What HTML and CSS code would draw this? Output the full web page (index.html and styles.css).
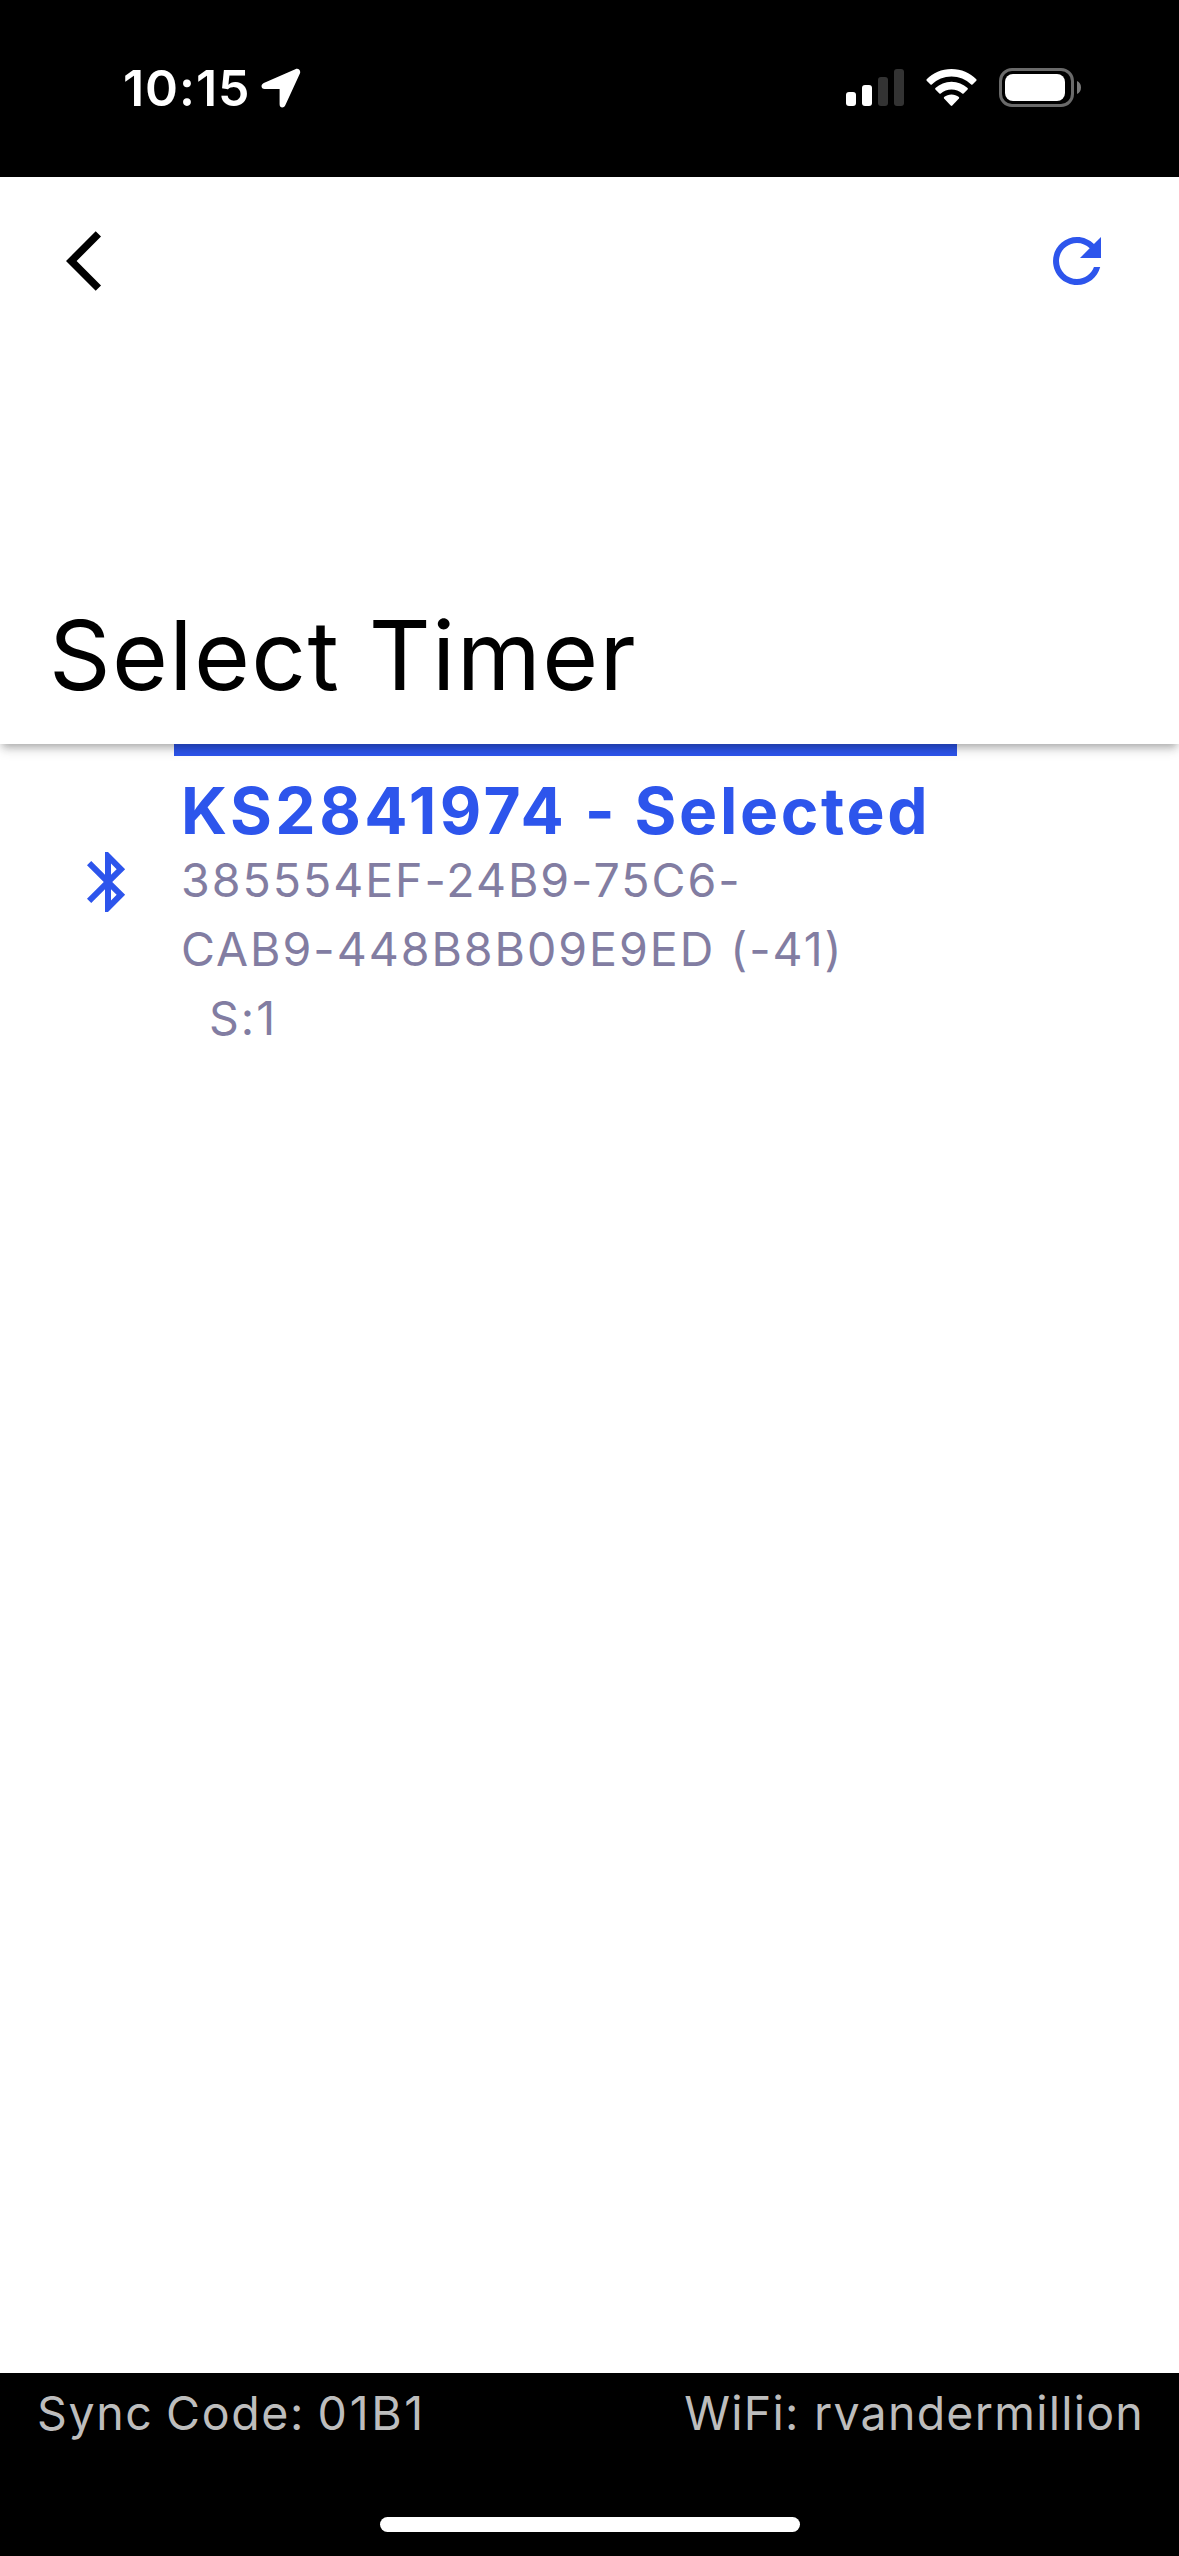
FILE: index.html
```html
<!DOCTYPE html>
<html lang="en">
<head>
<meta charset="utf-8">
<title>Select Timer</title>
<link rel="stylesheet" href="styles.css">
</head>
<body>
<div class="status-bar">
  <div class="status-left">
    <span class="time">10:15</span>
    <svg class="location" width="40" height="40" viewBox="0 0 40 40"><path d="M34.3 1.2 2.8 15.1C-.6 16.700-.1 21 3.700 21H18.600V36.200C18.600 40.200 22.700 40.600 24.300 37.300L38.900 5.600C40.100 2.700 37.700-.2 34.300 1.200Z"/></svg>
  </div>
  <div class="status-right">
    <svg class="signal" width="58" height="38" viewBox="0 0 58 38">
      <rect x="0" y="23" width="10" height="14" rx="3"/>
      <rect x="16" y="16" width="10" height="21" rx="3"/>
      <rect class="dim" x="32" y="8" width="10" height="29" rx="3"/>
      <rect class="dim" x="48" y="0" width="10" height="37" rx="3"/>
    </svg>
    <svg class="wifi" width="51" height="38" viewBox="0 0 51 38">
      <path d="M25.500 0C35.500 0 44 4 50.300 10.200Q51 11 50.300 11.700L46.500 15.500Q45.800 16 45.200 15.500C39.800 10.300 33 7.500 25.500 7.500S11.200 10.300 5.800 15.500Q5.200 16 4.500 15.500L.7 11.700Q0 11 .7 10.200C7 4 15.500 0 25.500 0Z"/>
      <path d="M25.500 12.800C31.800 12.800 37.200 15.200 41.600 19.100Q42.200 19.800 41.600 20.500L37.600 24.500Q36.900 25 36.200 24.500C33.200 21.900 29.600 20.400 25.500 20.400S17.800 21.900 14.800 24.500Q14.100 25 13.400 24.500L9.400 20.500Q8.800 19.800 9.400 19.100C13.800 15.200 19.200 12.800 25.500 12.800Z"/>
      <path d="M25.500 25.500C28.300 25.500 30.800 26.400 32.900 28Q33.500 28.700 32.900 29.400L26.300 36.500Q25.500 37.300 24.700 36.500L18.100 29.400Q17.500 28.700 18.100 28C20.200 26.400 22.700 25.500 25.500 25.500Z"/>
    </svg>
    <svg class="battery" width="83" height="40" viewBox="0 0 83 40">
      <rect class="shell" x="1.500" y="1.500" width="72" height="36" rx="11.500"/>
      <rect x="6" y="6" width="60" height="27" rx="8"/>
      <path class="cap" d="M78 13C80.500 14 82 16.500 82 19.500S80.500 25 78 26Z"/>
    </svg>
  </div>
</div>
<header class="app-bar">
  <div class="toolbar">
    <svg class="back" width="72" height="72" viewBox="0 0 24 24"><path d="M11.670 3.870 9.900 2.100 0 12l9.900 9.900 1.770-1.770L3.540 12z"/></svg>
    <svg class="refresh" width="72" height="72" viewBox="0 0 24 24"><path d="M17.650 6.350C16.200 4.900 14.210 4 12 4c-4.420 0-7.990 3.580-7.990 8s3.570 8 7.990 8c3.730 0 6.840-2.550 7.730-6h-2.080c-.82 2.330-3.040 4-5.650 4-3.310 0-6-2.690-6-6s2.690-6 6-6c1.660 0 3.140.69 4.220 1.780L13 11h7V4l-2.350 2.350z"/></svg>
  </div>
  <h1 class="title">Select Timer</h1>
</header>
<main class="devices">
  <div class="device">
    <div class="leading">
      <svg class="bluetooth" width="72" height="72" viewBox="0 0 24 24"><path d="M17.710 7.710 12 2h-1v7.590L6.410 5 5 6.410 10.590 12 5 17.590 6.410 19 11 14.410V22h1l5.710-5.710-4.300-4.290 4.300-4.290zM13 5.830l1.880 1.880L13 9.590V5.830zm1.880 10.460L13 18.170v-3.760l1.880 1.880z"/></svg>
    </div>
    <div class="details">
      <h2 class="name"><span class="serial">KS2841974</span> - Selected</h2>
      <p class="line">385554EF-24B9-75C6-</p>
      <p class="line">CAB9-448B8B09E9ED (-41)</p>
      <p class="line slot">S:1</p>
    </div>
  </div>
</main>
<footer class="footer">
  <div class="footer-row">
    <span class="sync">Sync Code: <span class="code">01B1</span></span>
    <span class="network">WiFi: rvandermillion</span>
  </div>
  <div class="home-indicator"></div>
</footer>
</body>
</html>
```
FILE: styles.css
```css
* { box-sizing: border-box; }

body {
  display: flex;
  flex-direction: column;
  width: 1179px;
  height: 2556px;
  margin: 0;
  overflow: hidden;
  background: #fff;
  color: #000;
  font-family: Inter, "Liberation Sans", sans-serif;
}

h1, h2, p { margin: 0; }
svg { display: block; flex: none; }

.status-bar {
  display: flex;
  justify-content: space-between;
  height: 177px;
  padding: 58px 97px 0 123px;
  background: #000;
  color: #fff;
  fill: #fff;
}

.status-left, .status-right { display: flex; align-items: flex-start; }
.time { font-size: 50px; font-weight: 600; line-height: 60px; letter-spacing: 0.95px; width: 138px; }
.location { margin-top: 10px; }
.signal { margin-top: 11px; }
.dim { fill: #333; }
.wifi { margin: 11px 22px 0; }
.battery { margin-top: 10px; }
.shell { fill: none; stroke: #6a6a6a; stroke-width: 3; }
.cap { fill: #7a7a7a; }

.app-bar {
  position: relative;
  z-index: 1;
  display: flex;
  flex-direction: column;
  justify-content: space-between;
  height: 567px;
  padding: 48px 66px 29px 49px;
  background: #fff;
  box-shadow: 0 6px 7px -3px rgba(0, 0, 0, .2), 0 3px 15px rgba(0, 0, 0, .03), 0 5px 12px rgba(0, 0, 0, .14);
  clip-path: inset(0 0 -40px 0);
}

.toolbar { display: flex; justify-content: space-between; }
.back { margin-left: 17px; }
.refresh { fill: #2d55ec; }
.title { font-size: 96px; font-weight: 400; line-height: 120px; letter-spacing: 1.380px; }

.devices { flex: 1; }
.device { display: flex; }
.leading { width: 174px; padding: 102px 0 0 72px; fill: #2d55ec; }

.details {
  width: 783px;
  padding: 20px 0 0 7px;
  border-top: 12px solid #2d55ec;
}

.name { color: #2d55ec; font-size: 64px; font-weight: 700; line-height: 70px; letter-spacing: 2.660px; word-spacing: -0.500px; white-space: nowrap; }
.serial { letter-spacing: 3.500px; }
.line { color: #827da2; font-size: 46.500px; line-height: 69px; letter-spacing: 1.970px; white-space: nowrap; }
.slot { padding-left: 28px; }

.footer {
  display: flex;
  flex-direction: column;
  align-items: center;
  justify-content: space-between;
  height: 183px;
  padding: 6px 0 24px;
  background: #000;
}

.footer-row {
  display: flex;
  justify-content: space-between;
  width: 100%;
  padding: 0 35px 0 37px;
  color: #bdbdbd;
  font-size: 46.500px;
  line-height: 69px;
}

.sync { letter-spacing: 1.600px; word-spacing: -2px; }
.code { letter-spacing: 2.700px; }
.network { letter-spacing: 1.240px; }
.home-indicator { width: 420px; height: 15px; border-radius: 8px; background: #fff; }
```
